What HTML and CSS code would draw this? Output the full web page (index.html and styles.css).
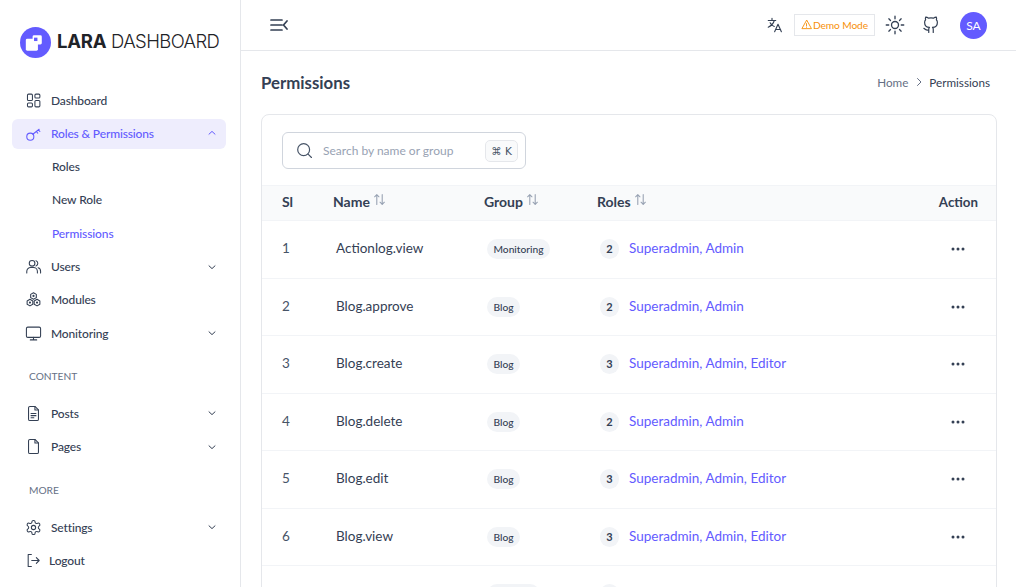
FILE: index.html
```html
<!DOCTYPE html>
<html>
<head>
  <title>Permissions - Lara Dashboard</title>
  <link rel="stylesheet" href="styles.css">
</head>
<body>
  <div class="app">
    <aside class="sidebar">
      <div class="logo">
        <svg class="logo-mark" viewBox="0 0 32 32"><circle cx="16" cy="16" r="16" fill="#635bff"/><rect x="13" y="8.500" width="9.500" height="9.500" rx="1.500" fill="#fff"/><rect x="6" y="12" width="12.500" height="12.500" rx="1.500" fill="#fff"/><rect x="14.500" y="11" width="3.500" height="3.500" fill="#635bff"/></svg>
        <span class="logo-text"><b>LARA</b> DASHBOARD</span>
      </div>
      <nav class="nav">
        <a class="nav-item"><svg class="icon" viewBox="0 0 24 24"><rect x="3.500" y="3" width="7" height="9" rx="1.500"/><rect x="14" y="3" width="7" height="5.500" rx="1.500"/><rect x="3.500" y="15.500" width="7" height="5.500" rx="1.500"/><rect x="14" y="12" width="7" height="9" rx="1.500"/></svg>Dashboard</a>
        <a class="nav-item active"><svg class="icon" viewBox="0 0 24 24"><circle cx="7.500" cy="16.500" r="5"/><path d="M11 13 20 6M16 9.200l2 2.300M19 7l2 2.200"/></svg>Roles &amp; Permissions<svg class="chev" viewBox="0 0 10 10"><path d="M2 6.200 5 3.400l3 2.800"/></svg></a>
        <a class="sub-item">Roles</a>
        <a class="sub-item">New Role</a>
        <a class="sub-item current">Permissions</a>
        <a class="nav-item"><svg class="icon" viewBox="0 0 24 24"><circle cx="10" cy="7.500" r="4"/><path d="M2.500 21v-2a5.500 5.500 0 0 1 5.500-5.500h4a5.500 5.500 0 0 1 5.500 5.500v2M15.500 3.800a4 4 0 0 1 0 7.500M18.500 13.800a5 5 0 0 1 3.500 5V21"/></svg>Users<svg class="chev" viewBox="0 0 10 10"><path d="M2 3.800 5 6.600l3-2.800"/></svg></a>
        <a class="nav-item"><svg class="icon" viewBox="0 0 24 24"><path d="m12 2.500 4 2.300v4.600l-4 2.300-4-2.300V4.800zM7 11.700l4 2.300v4.600l-4 2.400-4-2.400V14zM17 11.700l4 2.300v4.600l-4 2.400-4-2.400V14z"/><circle cx="12" cy="7" r=".8"/><circle cx="7" cy="16.300" r=".8"/><circle cx="17" cy="16.300" r=".8"/></svg>Modules</a>
        <a class="nav-item"><svg class="icon" viewBox="0 0 24 24"><rect x="2" y="3" width="20" height="14.500" rx="2"/><path d="M12 17.500v3.500M7.500 21h9"/></svg>Monitoring<svg class="chev" viewBox="0 0 10 10"><path d="M2 3.800 5 6.600l3-2.800"/></svg></a>
        <div class="nav-label">CONTENT</div>
        <a class="nav-item"><svg class="icon" viewBox="0 0 24 24"><path d="M14 2H7a2 2 0 0 0-2 2v16a2 2 0 0 0 2 2h10a2 2 0 0 0 2-2V7z"/><path d="M14 2v5h5M8.500 12h7M8.500 15h7M8.500 18h4"/></svg>Posts<svg class="chev" viewBox="0 0 10 10"><path d="M2 3.800 5 6.600l3-2.800"/></svg></a>
        <a class="nav-item"><svg class="icon" viewBox="0 0 24 24"><path d="M14 2H7a2 2 0 0 0-2 2v16a2 2 0 0 0 2 2h10a2 2 0 0 0 2-2V7z"/><path d="M14 2v5h5"/></svg>Pages<svg class="chev" viewBox="0 0 10 10"><path d="M2 3.800 5 6.600l3-2.800"/></svg></a>
        <div class="nav-label">MORE</div>
        <a class="nav-item"><svg class="icon" viewBox="0 0 24 24"><circle cx="12" cy="12" r="3"/><path d="M12.220 2h-.44a2 2 0 0 0-2 2v.18a2 2 0 0 1-1 1.730l-.43.25a2 2 0 0 1-2 0l-.15-.08a2 2 0 0 0-2.730.73l-.22.38a2 2 0 0 0 .73 2.730l.15.1a2 2 0 0 1 1 1.720v.51a2 2 0 0 1-1 1.740l-.15.09a2 2 0 0 0-.73 2.730l.22.38a2 2 0 0 0 2.730.73l.15-.08a2 2 0 0 1 2 0l.43.25a2 2 0 0 1 1 1.730V20a2 2 0 0 0 2 2h.44a2 2 0 0 0 2-2v-.18a2 2 0 0 1 1-1.730l.43-.25a2 2 0 0 1 2 0l.15.08a2 2 0 0 0 2.730-.73l.22-.39a2 2 0 0 0-.73-2.730l-.15-.08a2 2 0 0 1-1-1.740v-.5a2 2 0 0 1 1-1.740l.15-.09a2 2 0 0 0 .73-2.730l-.22-.38a2 2 0 0 0-2.730-.73l-.15.08a2 2 0 0 1-2 0l-.43-.25a2 2 0 0 1-1-1.730V4a2 2 0 0 0-2-2z"/></svg>Settings<svg class="chev" viewBox="0 0 10 10"><path d="M2 3.800 5 6.600l3-2.800"/></svg></a>
        <a class="nav-item logout"><svg class="icon" viewBox="0 0 24 24"><path d="M9 3.500H4.500v17H9M9.500 12H20M16 8l4 4-4 4"/></svg>Logout</a>
      </nav>
    </aside>

    <div class="main">
      <header class="topbar">
        <svg class="menu-toggle" viewBox="0 0 18 14"><path d="M1 2h11M1 7h11M1 12h11M17 3l-3.500 4 3.500 4"/></svg>
        <div class="top-actions">
          <svg class="top-icon translate" viewBox="0 0 24 24"><path d="M3 6h10M8 3v3M11 6c-1 4-4 7-8 9M5.500 9c1 2.300 3 4 5.500 5M11.500 21l4.500-10 4.500 10M13 18h6.500"/></svg>
          <span class="demo-badge"><svg class="warn" viewBox="0 0 12 12"><path d="M6 1.500 1 10.500h10zM6 5v2.500M6 8.800v.2"/></svg>Demo Mode</span>
          <svg class="top-icon sun" viewBox="0 0 24 24"><circle cx="12" cy="12" r="4.200"/><path d="M12 1.500v3M12 19.500v3M1.500 12h3M19.500 12h3M4.600 4.600l2 2M17.400 17.400l2 2M4.600 19.400l2-2M17.400 6.600l2-2"/></svg>
          <svg class="top-icon github" viewBox="0 0 24 24"><path d="M15 22v-4a4 4 0 0 0-1-3c3 0 6.500-1.500 6.500-6.500a5 5 0 0 0-1.300-3.500 4.500 4.500 0 0 0-.2-3.500s-1.200-.3-3.800 1.400a13 13 0 0 0-6.400 0C6.200 1.200 5 1.500 5 1.500a4.500 4.500 0 0 0-.2 3.500 5 5 0 0 0-1.300 3.500c0 5 3.500 6.500 6.500 6.500a4 4 0 0 0-1 3v4M9 18.500c-4 1.500-4.500-1.500-6.500-2"/></svg>
          <span class="avatar">SA</span>
        </div>
      </header>

      <div class="content">
        <div class="page-head">
          <h1>Permissions</h1>
          <div class="crumbs"><span class="crumb-link">Home</span><svg class="crumb-sep" viewBox="0 0 10 10"><path d="M3.500 1.500 7 5 3.500 8.500"/></svg><span>Permissions</span></div>
        </div>

        <section class="card">
          <div class="card-top">
            <div class="search">
              <svg class="search-icon" viewBox="0 0 20 20"><circle cx="9" cy="9" r="7"/><path d="m14.200 14.200 4 4"/></svg>
              <span class="search-text">Search by name or group</span>
              <span class="kbd">⌘ K</span>
            </div>
          </div>
          <table class="perm-table">
            <colgroup><col class="col-si"><col class="col-name"><col class="col-group"><col class="col-roles"><col class="col-action"></colgroup>
            <thead>
              <tr>
                <th>Sl</th>
                <th>Name<svg class="sort" viewBox="0 0 12 12"><path d="M3.500 10.500v-9M1.500 3.500l2-2 2 2M8.500 1.500v9M6.500 8.500l2 2 2-2"/></svg></th>
                <th>Group<svg class="sort" viewBox="0 0 12 12"><path d="M3.500 10.500v-9M1.500 3.500l2-2 2 2M8.500 1.500v9M6.500 8.500l2 2 2-2"/></svg></th>
                <th>Roles<svg class="sort" viewBox="0 0 12 12"><path d="M3.500 10.500v-9M1.500 3.500l2-2 2 2M8.500 1.500v9M6.500 8.500l2 2 2-2"/></svg></th>
                <th class="th-action">Action</th>
              </tr>
            </thead>
            <tbody id="perm-body"></tbody>
          </table>
        </section>
      </div>
    </div>
  </div>

  <script>
    const permissions = [
      [1, 'Actionlog.view', 'Monitoring', 2, 'Superadmin, Admin'],
      [2, 'Blog.approve', 'Blog', 2, 'Superadmin, Admin'],
      [3, 'Blog.create', 'Blog', 3, 'Superadmin, Admin, Editor'],
      [4, 'Blog.delete', 'Blog', 2, 'Superadmin, Admin'],
      [5, 'Blog.edit', 'Blog', 3, 'Superadmin, Admin, Editor'],
      [6, 'Blog.view', 'Blog', 3, 'Superadmin, Admin, Editor']
    ];

    // Build one table row per permission
    const tableBody = document.getElementById('perm-body');
    permissions.forEach(p => {
      const row = document.createElement('tr');
      row.innerHTML = `
        <td class="td-si">${p[0]}</td>
        <td class="td-name">${p[1]}</td>
        <td><span class="pill">${p[2]}</span></td>
        <td><span class="count">${p[3]}</span><a class="role-link">${p[4]}</a></td>
        <td class="td-action"><svg class="dots" viewBox="0 0 14 4"><circle cx="2" cy="2" r="1.500"/><circle cx="7" cy="2" r="1.500"/><circle cx="12" cy="2" r="1.500"/></svg></td>
      `;
      tableBody.appendChild(row);
    });

    // Next row starts below the fold, only the tops of its pills show
    const lastRow = document.createElement('tr');
    lastRow.innerHTML = `
      <td></td>
      <td></td>
      <td><span class="pill pill-blank"></span></td>
      <td><span class="count"></span></td>
      <td></td>
    `;
    tableBody.appendChild(lastRow);
  </script>
</body>
</html>
```

FILE: styles.css
```css
* {
  box-sizing: border-box;
}

html, body {
  margin: 0;
  height: 100%;
  overflow: hidden;
}

body {
  font-family: Lato, sans-serif;
  color: #344054;
  background-color: #fff;
}

svg {
  fill: none;
  stroke: currentColor;
  stroke-linecap: round;
  stroke-linejoin: round;
  flex-shrink: 0;
}

.app {
  display: flex;
  height: 100vh;
}

/* Sidebar */
.sidebar {
  width: 241px;
  flex-shrink: 0;
  border-right: 1px solid #e5e7eb;
  padding: 25px 14px 0 12px;
}

.logo {
  display: flex;
  align-items: center;
  gap: 6px;
  padding-left: 8px;
  height: 32px;
}

.logo-mark {
  width: 31px;
  height: 31px;
  margin-top: 2px;
  stroke: none;
}

.logo-text {
  font-family: Inter, sans-serif;
  font-size: 18.5px;
  font-weight: 300;
  letter-spacing: -0.6px;
  color: #1f2328;
  white-space: nowrap;
}

.logo-text b {
  font-weight: 700;
  letter-spacing: -0.2px;
}

.nav {
  margin-top: 29px;
}

.nav-item {
  display: flex;
  align-items: center;
  height: 30px;
  margin-bottom: 3.33px;
  padding: 0 9px 2px 13px;
  border-radius: 6px;
  font-size: 12px;
  font-weight: 500;
  letter-spacing: -0.15px;
  color: #344054;
}

.icon {
  width: 17px;
  height: 17px;
  margin-right: 9px;
  stroke-width: 1.5;
}

.chev {
  width: 10px;
  height: 10px;
  margin-left: auto;
  stroke-width: 1;
}

.nav-item.active {
  background-color: #eeedfd;
  color: #635bff;
}

.sub-item {
  display: flex;
  align-items: center;
  height: 30px;
  margin-bottom: 3.33px;
  padding: 0 0 2px 40px;
  font-size: 12px;
  font-weight: 500;
  letter-spacing: -0.1px;
  color: #344054;
}

.sub-item.current {
  color: #635bff;
}

.nav-label {
  height: 18px;
  margin: 18px 0 14.200px;
  padding-left: 17px;
  font-size: 10.200px;
  line-height: 18px;
  color: #667085;
}

.logout .icon {
  margin-right: 7px;
}

/* Top bar */
.main {
  flex: 1;
  min-width: 0;
}

.topbar {
  display: flex;
  align-items: center;
  justify-content: space-between;
  height: 51px;
  padding: 0 29px;
  border-bottom: 1px solid #e5e7eb;
}

.menu-toggle {
  width: 18px;
  height: 14px;
  stroke-width: 1.7;
  color: #344054;
}

.top-actions {
  display: flex;
  align-items: center;
}

.top-icon {
  width: 18px;
  height: 18px;
  stroke-width: 1.6;
  color: #344054;
}

.translate {
  margin-right: 10px;
  stroke-width: 1.5;
}

.demo-badge {
  display: flex;
  align-items: center;
  height: 22px;
  padding: 0 6px;
  margin-right: 10px;
  border: 1px solid #e5e7eb;
  font-size: 10.200px;
  letter-spacing: -0.1px;
  color: #f79009;
}

.warn {
  width: 11px;
  height: 11px;
  margin: 0 1px 2px 0;
}

.sun {
  width: 20px;
  height: 20px;
  margin-right: 17px;
}

.github {
  margin-right: 20px;
}

.avatar {
  display: flex;
  align-items: center;
  justify-content: center;
  width: 27px;
  height: 27px;
  border-radius: 50%;
  background-color: #635bff;
  color: #fff;
  font-size: 12px;
}

/* Content */
.content {
  padding: 0 19px 0 20px;
}

.page-head {
  display: flex;
  align-items: center;
  justify-content: space-between;
  height: 63px;
  padding-right: 7px;
}

h1 {
  margin: 0;
  font-size: 16.800px;
  font-weight: 700;
  color: #344054;
}

.crumbs {
  display: flex;
  align-items: center;
  margin-bottom: 2px;
  font-size: 11.700px;
  color: #344054;
}

.crumb-link {
  color: #667085;
  padding-top: 1px;
}

.crumb-sep {
  width: 10px;
  height: 10px;
  margin: 0 5px 0 6px;
  color: #667085;
}

.card {
  border: 1px solid #e5e7eb;
  border-radius: 8px;
  overflow: hidden;
}

.card-top {
  padding: 17px 20px 16px;
}

.search {
  display: flex;
  align-items: center;
  width: 244px;
  height: 37px;
  padding: 0 7px 0 13px;
  border: 1px solid #d0d5dd;
  border-radius: 6px;
}

.search-icon {
  width: 17px;
  height: 17px;
  stroke-width: 1.4;
  color: #475467;
}

.search-text {
  margin-left: 10px;
  font-size: 12px;
  color: #98a2b3;
}

.kbd {
  margin-left: auto;
  width: 33px;
  height: 22px;
  line-height: 20px;
  text-align: center;
  border: 1px solid #e5e7eb;
  border-radius: 5px;
  background-color: #f9fafb;
  font-family: "DejaVu Sans", sans-serif;
  font-size: 10.500px;
  color: #475467;
}

.perm-table {
  width: 100%;
  border-collapse: collapse;
  table-layout: fixed;
}

.col-si { width: 51px; }
.col-name { width: 151px; }
.col-group { width: 113px; }
.col-action { width: 100px; }

th {
  height: 35px;
  padding: 0 0 3px 20px;
  text-align: left;
  font-size: 14px;
  font-weight: 700;
  color: #344054;
  background-color: #f9fafb;
  border-top: 1px solid #f2f4f7;
  border-bottom: 1px solid #f2f4f7;
}

.sort {
  width: 13px;
  height: 13px;
  margin-left: 3px;
  vertical-align: 1px;
  color: #98a2b3;
  stroke-width: 1;
}

.th-action {
  padding: 0 18px 3px 0;
  text-align: right;
  font-size: 13.300px;
}

td {
  height: 57.5px;
  padding: 0 0 0 20px;
  border-bottom: 1px solid #f2f4f7;
  font-size: 13.500px;
  color: #344054;
}

.td-si {
  padding-bottom: 2px;
  color: #475467;
}

.td-name {
  padding: 0 0 2px 23px;
}

.pill {
  display: inline-block;
  height: 20px;
  margin-left: 3px;
  padding: 0 6.500px;
  border-radius: 10px;
  background-color: #f2f4f7;
  font-size: 10.200px;
  font-weight: 500;
  line-height: 20px;
  color: #344054;
}

.pill-blank {
  width: 53px;
  vertical-align: middle;
}

.count {
  display: inline-block;
  width: 19px;
  height: 20px;
  margin: 0 10px 0 3px;
  border-radius: 10px;
  background-color: #f2f4f7;
  font-size: 11px;
  font-weight: 700;
  line-height: 20px;
  text-align: center;
  vertical-align: middle;
}

.role-link {
  color: #635bff;
  font-size: 13.500px;
  vertical-align: -1px;
}

.td-action {
  padding: 0 31px 3px 0;
  text-align: right;
}

.dots {
  width: 14px;
  height: 4px;
  display: inline-block;
  vertical-align: middle;
  fill: #344054;
  stroke: none;
}
```
